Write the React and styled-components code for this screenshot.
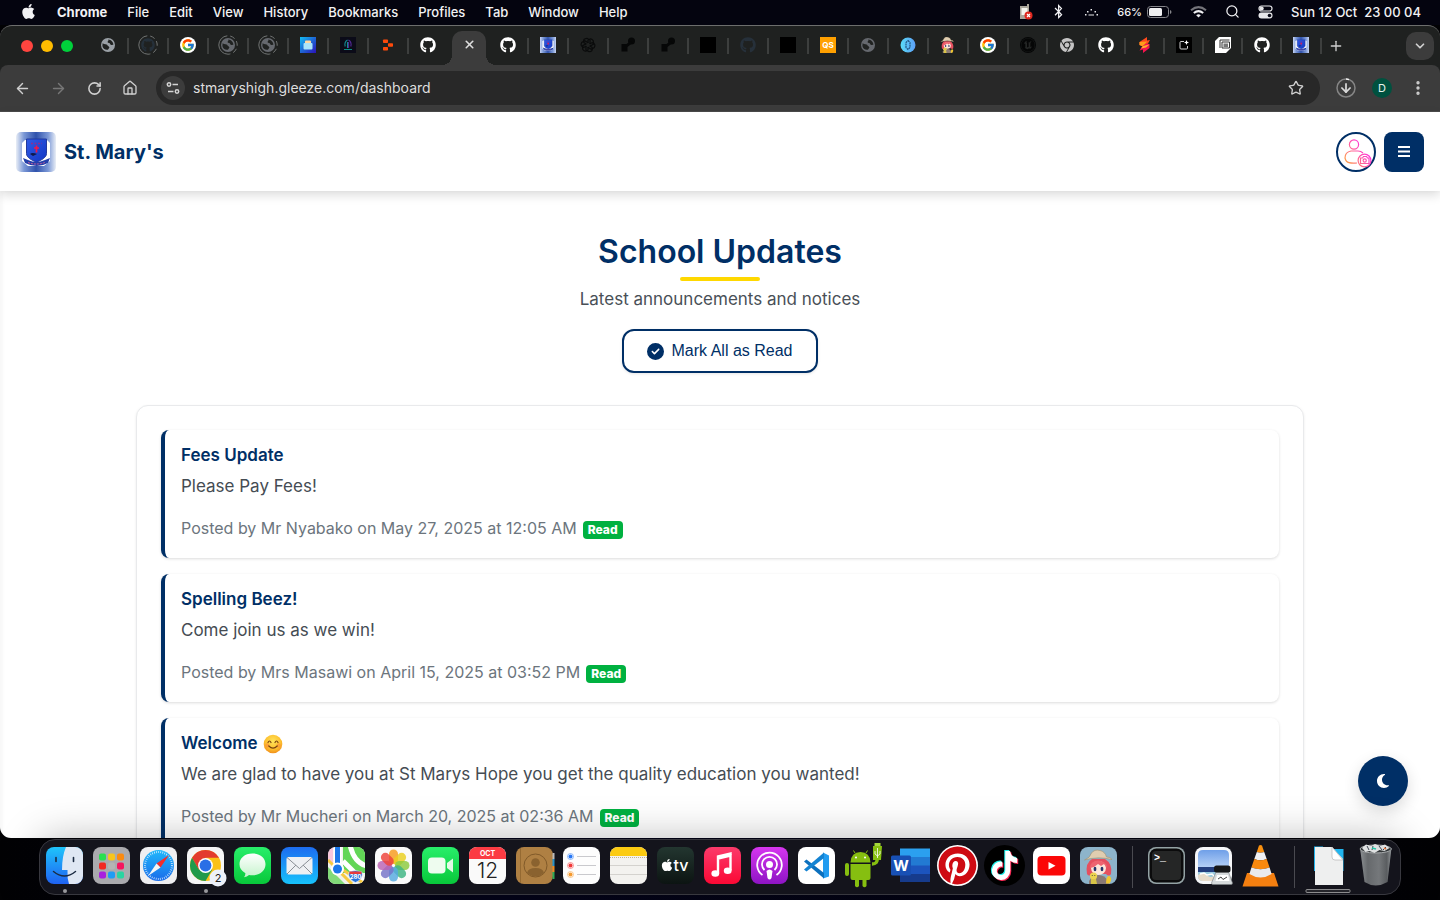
import React from "react";
import styled, { createGlobalStyle, css } from "styled-components";
import {
  FaApple, FaGithub, FaChrome, FaTiktok, FaPinterest, FaBluetoothB, FaMoon, FaCircleCheck,
} from "react-icons/fa6";
import { FcGoogle } from "react-icons/fc";
import { SiUnrealengine } from "react-icons/si";
import {
  ArrowLeft, ArrowRight, RotateCw, House, Star, ArrowDown, EllipsisVertical, X, Plus, ChevronDown, Search,
} from "lucide-react";

const navy = "#002f66";

const GlobalStyle = createGlobalStyle`
  * { box-sizing: border-box; }
  body { margin: 0; background: #020208; font-family: Inter, "Liberation Sans", sans-serif; }
  button, input { font: inherit; }
  h1, h2, h3, p { margin: 0; }
`;

const Desktop = styled.div`
  height: 100vh;
  display: flex;
  flex-direction: column;
  overflow: hidden;
  background: linear-gradient(90deg, #020204, #04041a 35%, #030312 70%, #020204);
`;

/* ---------- macOS menu bar ---------- */

const MenuBar = styled.header`
  flex: none;
  height: 25px;
  padding: 0 19px 2px 20px;
  display: flex;
  align-items: center;
  justify-content: space-between;
  color: #f2f2f4;
  font-size: 13px;
  line-height: 16px;
  background: #04040f;
`;

const MenuList = styled.nav`
  display: flex;
  align-items: center;
  gap: 20px;
  white-space: nowrap;
`;

const MenuItem = styled.button`
  border: 0;
  padding: 0;
  background: none;
  color: inherit;
  font-weight: ${(p) => (p.$strong ? 700 : 500)};
`;

const StatusList = styled.div`
  display: flex;
  align-items: center;
  gap: 18px;
  white-space: pre;
  font-weight: 500;
`;

const BatteryStatus = styled.span`
  display: flex;
  align-items: center;
  gap: 5px;
  font-size: 11px;
`;

/* ---------- Chrome window ---------- */

const Window = styled.section`
  flex: 1;
  min-height: 0;
  display: flex;
  flex-direction: column;
  overflow: hidden;
  border-top: 1px solid #6d6e6d;
  border-radius: 12px 12px 11px 11px;
  background: #1f2120;
`;

const TabStrip = styled.div`
  flex: none;
  height: 39px;
  padding: 0 6px 0 21px;
  display: flex;
  align-items: center;
`;

const TrafficLights = styled.div`
  width: 68px;
  display: flex;
  gap: 8px;
`;

const Light = styled.button`
  width: 12px;
  height: 12px;
  padding: 0;
  border: 0;
  border-radius: 50%;
  background: ${(p) => p.$color};
`;

const TabCell = styled.div`
  flex: none;
  width: ${(p) => (p.$narrow ? 39 : 40)}px;
  height: 100%;
  display: flex;
  align-items: center;
  &::after {
    content: "";
    width: 2px;
    height: 16px;
    background: ${(p) => (p.$plain ? "transparent" : "#3d3f3e")};
  }
`;

const TabButton = styled.button`
  flex: 1;
  height: 32px;
  padding: 0 0 2px;
  border: 0;
  background: none;
  display: flex;
  align-items: center;
  justify-content: center;
  color: ${(p) => p.$color || "#fff"};
  svg { display: block; flex: none; }
`;

const ActiveTab = styled.div`
  position: relative;
  flex: none;
  align-self: flex-end;
  width: 34px;
  height: 34px;
  padding-bottom: 6px;
  margin: 0 3px;
  border-radius: 10px 10px 0 0;
  background: #3c3c3c;
  display: flex;
  align-items: center;
  &::before, &::after {
    content: "";
    position: absolute;
    bottom: 0;
    width: 10px;
    height: 10px;
  }
  &::before { right: 100%; background: radial-gradient(circle at 0 0, transparent 10px, #3c3c3c 10px); }
  &::after { left: 100%; background: radial-gradient(circle at 100% 0, transparent 10px, #3c3c3c 10px); }
`;

const IconButton = styled.button`
  flex: none;
  width: 28px;
  height: 28px;
  padding: 0;
  border: 0;
  border-radius: ${(p) => (p.$filled ? "10px" : "50%")};
  background: ${(p) => (p.$filled ? "#3c3c3c" : "none")};
  color: ${(p) => (p.$dim ? "#777" : "#cfcfcf")};
  display: flex;
  align-items: center;
  justify-content: center;
`;

const Spacer = styled.div`flex: 1;`;

const Toolbar = styled.div`
  flex: none;
  height: 47px;
  padding: 0 8px;
  display: flex;
  align-items: center;
  gap: 8px;
  border-bottom: 1px solid #4b4b4b;
  border-radius: 8px 8px 0 0;
  background: #3c3c3c;
`;

const Omnibox = styled.form`
  flex: 1;
  height: 34px;
  margin: 0 4px;
  padding: 0 10px 0 5px;
  display: flex;
  align-items: center;
  gap: 8px;
  border-radius: 17px;
  background: #282828;
`;

const SiteInfo = styled(IconButton)`
  width: 24px;
  height: 24px;
  background: #3c3c3c;
`;

const Address = styled.input`
  flex: 1;
  min-width: 0;
  padding: 0;
  border: 0;
  outline: 0;
  background: none;
  color: #dedede;
  font-size: 14px;
  line-height: 20px;
`;

const Profile = styled.span`
  width: 20px;
  height: 20px;
  border-radius: 50%;
  background: #00513f;
  color: #e6f4f0;
  font-size: 11px;
  line-height: 20px;
`;

/* ---------- School site ---------- */

const Viewport = styled.div`
  position: relative;
  flex: 1;
  min-height: 0;
  display: flex;
  flex-direction: column;
  background: #fff;
`;

const SiteHeader = styled.header`
  position: relative;
  flex: none;
  padding: 20px 16px 19px;
  display: flex;
  align-items: center;
  justify-content: space-between;
  background: #fff;
  box-shadow: 0 4px 10px rgba(0, 0, 0, 0.14);
`;

const Brand = styled.a`
  display: flex;
  align-items: center;
  gap: 8px;
  color: ${navy};
  font-size: 20px;
  font-weight: 700;
  line-height: 24px;
  text-decoration: none;
`;

const HeaderActions = styled.div`
  display: flex;
  gap: 8px;
`;

const roundBox = css`
  width: 40px;
  height: 40px;
  padding: 0;
  display: flex;
  align-items: center;
  justify-content: center;
`;

const AvatarButton = styled.button`
  ${roundBox}
  border: 2px solid ${navy};
  border-radius: 50%;
  background: #fff;
`;

const MenuButton = styled.button`
  ${roundBox}
  border: 0;
  border-radius: 8px;
  background: ${navy};
  color: #fff;
`;

const Content = styled.main`
  flex: 1;
  min-height: 0;
  overflow: auto;
  scrollbar-width: none;
  padding: 41px 136px;
  box-shadow: inset 3px 0 3px rgba(0, 0, 0, 0.03);
`;

const Intro = styled.div`
  display: flex;
  flex-direction: column;
  align-items: center;
`;

const Title = styled.h1`
  color: ${navy};
  font-size: 32px;
  font-weight: 600;
  line-height: 40px;
  &::after {
    content: "";
    display: block;
    width: 80px;
    height: 4px;
    margin: 5px auto 0;
    border-radius: 2px;
    background: #ffd800;
  }
`;

const Subtitle = styled.p`
  margin-top: 5px;
  color: #495057;
  font-size: 17px;
  line-height: 26px;
`;

const MarkRead = styled.button`
  height: 44px;
  margin-top: 17px;
  padding: 0 24px 0 23px;
  display: flex;
  align-items: center;
  gap: 8px;
  border: 2px solid ${navy};
  border-radius: 12px;
  background: #fff;
  color: ${navy};
  font-family: "Liberation Sans", Arial, sans-serif;
  font-size: 16px;
  box-shadow: 0 1px 3px rgba(0, 0, 0, 0.1);
`;

const NoticeList = styled.section`
  margin-top: 32px;
  padding: 24px;
  display: flex;
  flex-direction: column;
  gap: 16px;
  border: 1px solid #e9eaec;
  border-radius: 12px;
  background: #fff;
  box-shadow: 0 1px 3px rgba(0, 0, 0, 0.08);
`;

const NoticeCard = styled.article`
  padding: 16px;
  border-left: 4px solid ${navy};
  border-radius: 8px;
  background: #fff;
  box-shadow: 0 1px 3px rgba(0, 0, 0, 0.14);
`;

const NoticeTitle = styled.h3`
  display: flex;
  align-items: center;
  gap: 5px;
  height: 19px;
  color: ${navy};
  font-size: 17px;
  font-weight: 600;
  line-height: 19px;
`;

const NoticeBody = styled.p`
  margin-top: 8px;
  color: #454c53;
  font-size: 17px;
  line-height: 26px;
`;

const NoticeMeta = styled.p`
  margin-top: 16px;
  display: flex;
  align-items: center;
  gap: 6px;
  color: #6c757d;
  font-size: 16px;
  line-height: 27px;
`;

const Badge = styled.span`
  padding: 0 5px;
  margin-top: 3px;
  border-radius: 4px;
  background: #00b140;
  color: #fff;
  font-size: 12px;
  font-weight: 800;
  line-height: 18px;
`;

const ThemeToggle = styled.button`
  position: absolute;
  right: 32px;
  bottom: 32px;
  width: 50px;
  height: 50px;
  padding: 0;
  border: 0;
  border-radius: 50%;
  background: ${navy};
  color: #fff;
  display: flex;
  align-items: center;
  justify-content: center;
  box-shadow: 0 6px 16px rgba(0, 0, 0, 0.14);
`;

/* ---------- Dock ---------- */

const DockArea = styled.footer`
  position: relative;
  flex: none;
  height: 62px;
  padding-top: 1px;
  display: flex;
  justify-content: center;
  align-items: flex-start;
`;

const Dock = styled.div`
  height: 56px;
  padding: 0 1px;
  display: flex;
  border: 1px solid #38383f;
  border-radius: 16px;
  background: #14141c;
  box-shadow: 0 0 42px rgba(0, 0, 0, 0.28);
`;

const DockItem = styled.button`
  flex: none;
  width: 47px;
  padding: 7px 0 0;
  border: 0;
  background: none;
  display: flex;
  flex-direction: column;
  align-items: center;
  gap: 5px;
  svg { display: block; overflow: visible; flex: none; }
  &::after {
    content: "";
    width: 4px;
    height: 4px;
    border-radius: 50%;
    background: ${(p) => (p.$running ? "#98989c" : "transparent")};
  }
`;

const DockDivider = styled.div`
  flex: none;
  width: 1px;
  height: 42px;
  margin: 6px 10px;
  background: #4a4a50;
`;

/* ---------- Small drawings ---------- */

const GlobeShape = ({ fill }) => (
  <g>
    <circle cx="8" cy="8" r="7" fill={fill} />
    <path d="M2.6 6.2C5 7.8 7.3 6.6 7.6 8.6c.1 1 1.4.6 1.7 1.6.2 1-1 1.500-1.300 2.500-2.700.6-5.200-1.200-5.600-3.600ZM8.200 2.600c.9 1.400-.9 1.800-.6 2.700.3.900 2.500.3 2.600 1.600.1.900 1.500 1.300 3.200.9-.1-2.500-2.200-4.900-5.200-5.200Z" fill="#202221" />
  </g>
);

const Globe = ({ fill = "#9aa0a6" }) => (
  <svg width="16" height="16" viewBox="0 0 16 16"><GlobeShape fill={fill} /></svg>
);

const Ring = () => (
  <circle cx="10" cy="10" r="9.200" fill="none" stroke="#707372" strokeWidth="1" strokeDasharray="28 3 5 3 5 3 5 3" transform="rotate(90 10 10)" />
);

const LoadingGlobe = () => (
  <svg width="20" height="20" viewBox="0 0 20 20">
    <Ring />
    <g transform="translate(2 2)"><GlobeShape fill="#66696f" /></g>
  </svg>
);

const LoadingGithub = () => (
  <svg width="20" height="20" viewBox="0 0 20 20">
    <Ring />
    <FaGithub x="3" y="3" size={14} color="#25303a" />
  </svg>
);

const GoogleIcon = () => (
  <svg width="16" height="16" viewBox="0 0 16 16">
    <circle cx="8" cy="8" r="8" fill="#fff" />
    <FcGoogle x="1" y="1" size={14} />
  </svg>
);

const MailFavicon = () => (
  <svg width="16" height="16" viewBox="0 0 16 16">
    <defs><linearGradient id="mf" x1="0" y1="0" x2="1" y2="1"><stop stopColor="#12bdf2" /><stop offset="1" stopColor="#2a10b8" /></linearGradient></defs>
    <rect width="16" height="16" fill="url(#mf)" />
    <rect x="5" y="3.500" width="6" height="5" rx="1" fill="#ffd9a0" />
    <rect x="3.500" y="6" width="9" height="6.500" rx="1" fill="#a9e4fb" />
  </svg>
);

const NeonFavicon = () => (
  <svg width="16" height="16" viewBox="0 0 16 16">
    <rect width="16" height="16" fill="#0b0b18" />
    <path d="M7.500 3C5 4.500 4.500 7 5.200 9.500M7.500 5v6" stroke="#138a94" fill="none" strokeWidth="1.100" />
    <path d="M8.500 3c2.500 1.500 3 4 2.300 6.500M8.600 5v6" stroke="#542a98" fill="none" strokeWidth="1.100" />
    <path d="M4 12.500h8" stroke="#0c8d83" strokeWidth="1.200" />
  </svg>
);

const ReplitIcon = () => (
  <svg width="16" height="16" viewBox="0 0 16 16" fill="#ff4a0a">
    <rect x="3" y="2.500" width="5" height="3.600" rx=".8" />
    <rect x="8" y="6.200" width="5" height="3.600" rx=".8" />
    <rect x="3" y="9.900" width="5" height="3.600" rx=".8" />
  </svg>
);

const Crest = ({ size = 16, id = "a", soft }) => (
  <svg width={size} height={size} viewBox="0 0 40 40" role="img" aria-label="School crest">
    <defs>
      <linearGradient id={`cr${id}`}>
        <stop stopColor={soft ? "#e9eef6" : "#c6d3f3"} /><stop offset=".2" stopColor="#7b98d6" /><stop offset=".5" stopColor="#2f52ac" />
        <stop offset=".8" stopColor="#7b98d6" /><stop offset="1" stopColor={soft ? "#e9eef6" : "#c6d3f3"} />
      </linearGradient>
      <linearGradient id={`cs${id}`} x1="0" y1="0" x2="1" y2="1"><stop stopColor="#2f5be6" /><stop offset="1" stopColor="#1236c4" /></linearGradient>
    </defs>
    <rect width="40" height="40" rx={soft ? 5 : 0} fill={`url(#cr${id})`} />
    <path d="M9 8h22l3 3v18l-6 5H12l-6-5V11Z" fill="#fff" />
    <path d="M10.500 7h20v14.500c0 4-5 6.500-10 8.800-5-2.300-10-4.800-10-8.800Z" fill={`url(#cs${id})`} stroke="#233a9c" />
    <path d="M15 11.500h11" stroke="#8a2d94" strokeWidth="1.300" strokeDasharray="2 1.500" />
    <path d="M20.500 13.500v7M18 16h5" stroke="#f01848" strokeWidth="1.700" />
    <path d="M14 22q2-2 7 0l-4 2Z" fill="#101848" />
    <path d="M7 26l5 2q8 4 17 0l5-2-2 5q-11 6-23 0Z" fill="#2440aa" />
    <path d="M12 30.500q8 3 17 0" stroke="#c75b9a" fill="none" strokeDasharray="2 1" />
  </svg>
);

const KnotIcon = () => (
  <svg width="16" height="16" viewBox="0 0 16 16" fill="none" stroke="#0a0b0b" strokeWidth="1.200">
    {[0, 60, 120, 180, 240, 300].map((a) => (
      <path key={a} d="M8 6V3.200q3-3 5.300.6v3.500L9.800 9.300" transform={`rotate(${a} 8 8)`} />
    ))}
  </svg>
);

const NodeIcon = () => (
  <svg width="16" height="16" viewBox="0 0 16 16" fill="#060707">
    <circle cx="11.500" cy="4" r="3.500" />
    <path d="M1.500 7h5l4-3 2 2-5 4v4.500h-6Z" />
  </svg>
);

const BlackSquare = () => <svg width="16" height="16"><rect width="16" height="16" fill="#000" /></svg>;

const QsIcon = () => (
  <svg width="16" height="16" viewBox="0 0 16 16">
    <rect width="16" height="16" fill="#ffa000" />
    <text x="8" y="11" textAnchor="middle" fontFamily="Inter, sans-serif" fontSize="8" fontWeight="700" fill="#fff">QS</text>
  </svg>
);

const CyanIcon = () => (
  <svg width="16" height="16" viewBox="0 0 16 16">
    <defs><linearGradient id="cy"><stop stopColor="#5adcf7" /><stop offset="1" stopColor="#5c9df5" /></linearGradient></defs>
    <circle cx="8" cy="8" r="7.500" fill="url(#cy)" />
    <path d="M8 3.500 10 5.500v5l-2 2-2-2v-5Z" stroke="#1c4a74" fill="none" strokeWidth="1.100" strokeDasharray="2 .6" />
  </svg>
);

const AnimeFace = () => (
  <g>
    <path d="M9 34Q12 28 18.500 28T28 34L29 37H9Z" fill="#8b7a74" />
    <path d="M7 27Q5 16 12 12h13q8 5 6 15-2 3-5 0H12q-3 3-5 0Z" fill="#e5505f" />
    <ellipse cx="18.500" cy="21" rx="7.500" ry="7" fill="#fde6da" />
    <path d="M10 21q0-7 8-7.500Q27 14 27 21l-3-4-3 2-3-2-4 3Z" fill="#ee6470" />
    <ellipse cx="15" cy="22" rx="1.400" ry="2.200" fill="#24356b" />
    <ellipse cx="22" cy="22" rx="1.400" ry="2.200" fill="#24356b" />
    <path d="M4.500 13Q10 11 11.500 6q3-4 8.500-2.500 5 1 6.500 6.500 4 0 5.500 2.500Q18 9 4.500 13Z" fill="#e0cdb0" stroke="#a3906f" strokeWidth=".6" />
    <circle cx="13.500" cy="29" r="3.600" fill="#ecd34f" />
    <circle cx="12.300" cy="28.500" r=".6" fill="#553" /><circle cx="14.800" cy="28.500" r=".6" fill="#553" />
    <path d="M26 36.500q0-8.500 3.500-7.500 3.500 3 0 7.500Z" fill="#f1c730" />
    <path d="M11 32h5l1 5h-6Z" fill="#d9c548" />
  </g>
);

const AnimeFavicon = () => (
  <svg width="16" height="16" viewBox="3 3 34 34"><AnimeFace /></svg>
);

const UnrealFavicon = () => (
  <svg width="16" height="16" viewBox="0 0 16 16">
    <circle cx="8" cy="8" r="8" fill="#050606" />
    <SiUnrealengine x="1" y="1" size={14} color="#242625" />
  </svg>
);

const FlashIcon = () => (
  <svg width="16" height="16" viewBox="0 0 16 16">
    <path d="M10 0v3.500l3-.5-2 3.500L6 9.500 2.500 8V5Z" fill="#ff4a1c" />
    <path d="M2.500 5 10 4.500l-4 5L2.500 8Z" fill="#ff9c1a" />
    <path d="M6 16v-3.500l-3.500 1 2.500-4 4-3L12.500 7v4Z" fill="#f5134e" />
    <path d="M12.500 7.500 6 9l-2 2.500 5-1Z" fill="#ffb02a" />
  </svg>
);

const SparkIcon = () => (
  <svg width="16" height="16" viewBox="0 0 16 16">
    <rect width="16" height="16" fill="#000" />
    <path d="M8 4.500H5q-1 0-1 1V11q0 1 1 1h5.500q1 0 1-1V9" fill="none" stroke="#d0d0d0" strokeWidth="1" />
    <path d="M10.500 3 11.200 4.800 13 5.500 11.200 6.200 10.500 8 9.800 6.200 8 5.500 9.800 4.800Z" fill="#fff" />
  </svg>
);

const StackIcon = () => (
  <svg width="16" height="16" viewBox="0 0 16 16">
    <path d="M4 0h12v11l-5 5H0V4Z" fill="#fff" />
    <path d="M5 11V3h9.500M7 11V5h7.500v6Z" fill="none" stroke="#303030" strokeWidth="1" /><rect x="8.500" y="6.500" width="4.500" height="3.500" fill="#777" />
  </svg>
);

const TuneIcon = () => (
  <svg width="16" height="16" viewBox="0 0 16 16" fill="none" stroke="#d4d4d4" strokeWidth="1.500">
    <circle cx="4" cy="4.500" r="1.700" /><path d="M7.500 4.500H13M3 11.500h5.500" /><circle cx="12" cy="11.500" r="1.700" />
  </svg>
);

const DownloadIcon = () => (
  <svg width="20" height="20" viewBox="0 0 20 20">
    <circle cx="10" cy="10" r="9" fill="none" stroke="#858585" strokeWidth="1.500" />
    <path d="M10 1a9 9 0 0 1 3 .6" fill="none" stroke="#eee" strokeWidth="1.500" />
    <ArrowDown x="3" y="3" size={14} strokeWidth={3} color="#d8d8d8" />
  </svg>
);

const PhoneStatus = () => (
  <svg width="14" height="16" viewBox="0 0 14 16">
    <path d="M1 2h7V0h2v15H1Z" fill="#aaa69c" /><rect x="2.500" y="4" width="6" height="7" fill="#f4f4ee" />
    <circle cx="9.500" cy="11.500" r="4" fill="#e0281f" /><path d="m8 10 3 3m0-3-3 3" stroke="#fff" strokeWidth="1.200" />
  </svg>
);

const DotsStatus = () => (
  <svg width="15" height="10" viewBox="0 0 15 10" fill="#e8e8ea">
    <rect x="1" y="7" width="1.500" height="1.500" /><rect x="3" y="4" width="1.500" height="1.500" /><rect x="4.500" y="7.500" width="5.500" height="1" />
    <rect x="6.500" y="2" width="1.500" height="1.500" /><rect x="10.500" y="4" width="1.500" height="1.500" /><rect x="12.500" y="7" width="1.500" height="1.500" />
  </svg>
);

const Battery = () => (
  <svg width="25" height="12" viewBox="0 0 25 12">
    <rect x=".5" y=".5" width="21" height="11" rx="3" fill="none" stroke="#85858a" />
    <rect x="2" y="2" width="13" height="8" rx="1.500" fill="#f0f0f2" /><path d="M23 4v4q1.500-.5 1.500-2T23 4Z" fill="#85858a" />
  </svg>
);

const WifiStatus = () => (
  <svg width="17" height="12" viewBox="0 0 17 12" fill="none" strokeWidth="2">
    <path d="M1 4.200Q8.500-2 16 4.200" stroke="#74747a" /><path d="M3.800 7Q8.500 3.200 13.200 7" stroke="#f0f0f2" />
    <path d="M6.200 9.200Q8.500 7.400 10.800 9.200L8.500 11.500Z" fill="#f0f0f2" />
  </svg>
);

const ControlCenter = () => (
  <svg width="15" height="14" viewBox="0 0 15 14">
    <rect x="1" y="1" width="13" height="5" rx="2.500" fill="none" stroke="#e8e8ea" strokeWidth="1.200" /><circle cx="3.700" cy="3.500" r="2" fill="#e8e8ea" />
    <rect x=".5" y="7.500" width="14" height="6" rx="3" fill="#e8e8ea" /><circle cx="11.500" cy="10.500" r="1.800" fill="#080814" />
  </svg>
);

const Smile = () => (
  <svg width="20" height="20" viewBox="0 0 20 20" role="img" aria-label="😊">
    <defs><radialGradient id="sm" cx=".5" cy=".35" r=".7"><stop stopColor="#ffe45a" /><stop offset=".6" stopColor="#fdc02f" /><stop offset="1" stopColor="#ee8516" /></radialGradient></defs>
    <circle cx="10" cy="10" r="9.300" fill="url(#sm)" />
    <circle cx="4.300" cy="11.500" r="2.200" fill="#fb8d3a" opacity=".6" /><circle cx="15.700" cy="11.500" r="2.200" fill="#fb8d3a" opacity=".6" />
    <path d="M5 8.500q1.500-3 3 0M12 8.500q1.500-3 3 0M5.800 12q4.200 4.300 8.400 0" fill="none" stroke="#7a4210" strokeWidth="1.200" strokeLinecap="round" />
  </svg>
);

const AvatarDrawing = () => (
  <svg width="36" height="36" viewBox="0 0 36 36" fill="none" stroke="url(#av)" strokeWidth="1.200">
    <defs><linearGradient id="av" gradientUnits="userSpaceOnUse" x1="7" y1="26" x2="26" y2="12"><stop stopColor="#ff9b4a" /><stop offset="1" stopColor="#ff2fe0" /></linearGradient></defs>
    <circle cx="16" cy="10.500" r="4.600" />
    <path d="M25 19q-2-2-5-2h-7q-6 1-6 7 1 4 4 4.700 3 .8 8 .3" />
    <circle cx="26.500" cy="26.500" r="6.400" fill="#fff" />
    <path d="M22.500 24h2l1-1.500h3l1 1.500H31v5.500h-8.500Z" /><circle cx="26.700" cy="26.500" r="1.600" />
  </svg>
);

const BarsIcon = () => (
  <svg width="12" height="14" viewBox="0 0 12 14" stroke="#fff" strokeWidth="1.800"><path d="M0 2h12M0 6.500h12M0 11h12" /></svg>
);

/* ---------- Dock icons ---------- */

const Tile = ({ fill, children }) => (
  <svg width="37" height="37" viewBox="0 0 37 37">
    <rect width="37" height="37" rx="8" fill={fill} />
    {children}
  </svg>
);

const Fade = ({ id, from, to }) => (
  <defs><linearGradient id={id} x1="0" y1="0" x2="0" y2="1"><stop stopColor={from} /><stop offset="1" stopColor={to} /></linearGradient></defs>
);

const Finder = () => (
  <Tile fill="url(#fi)">
    <Fade id="fi" from="#1fc4fb" to="#1f62f2" />
    <path d="M20 0h9a8 8 0 0 1 8 8v21a8 8 0 0 1-8 8h-6q-2-6-1.500-14H16Q16 9 20 0Z" fill="#dfe7f3" />
    <path d="M10 10.500v4M27.500 10.500v4" stroke="#1b2b42" strokeWidth="1.600" strokeLinecap="round" />
    <path d="M7.500 24.500q11 9 22 0" fill="none" stroke="#1b2b42" strokeWidth="1.500" strokeLinecap="round" />
  </Tile>
);

const launchColors = ["#29e04f", "#f8c51d", "#fb8a10", "#f22822", "#b4b4b4", "#f5145f", "#a820df", "#1e9cf4", "#2ad5a1"];
const Launchpad = () => (
  <Tile fill="#aaaaae">
    {launchColors.map((c, i) => (
      <rect key={c} x={6 + (i % 3) * 9} y={6.500 + Math.floor(i / 3) * 9} width="7" height="7" rx="2" fill={c} />
    ))}
  </Tile>
);

const Safari = () => (
  <Tile fill="#efeff1">
    <Fade id="sf" from="#20b8fb" to="#1a6bea" />
    <circle cx="18.500" cy="18.500" r="15.500" fill="url(#sf)" />
    <circle cx="18.500" cy="18.500" r="13.500" fill="none" stroke="#dff0ff" strokeWidth="2" strokeDasharray=".7 1.400" />
    <path d="M29 8 20.500 20.500 16.500 16.500Z" fill="#f22d2d" /><path d="M8 29 16.500 16.500 20.500 20.500Z" fill="#f5f5f5" />
  </Tile>
);

const ChromeDock = () => (
  <Tile fill="#f5f5f6">
    <circle cx="18.500" cy="18.500" r="15.500" fill="#fbc116" />
    <path d="M5 10.800A15.500 15.500 0 0 1 32 10.800H18.500l-7 11.500Z" fill="#e33b2e" />
    <path d="M5 10.800a15.500 15.500 0 0 0 13.500 23.200l6.800-11.500-13.500 0Z" fill="#219a4b" />
    <circle cx="18.500" cy="18.500" r="7.400" fill="#fff" /><circle cx="18.500" cy="18.500" r="5.900" fill="#2a6fe6" />
    <circle cx="31" cy="31" r="8.500" fill="#edf1fa" />
    <text x="31" y="35" textAnchor="middle" fontSize="11" fontFamily="Inter, sans-serif" fill="#222">2</text>
  </Tile>
);

const Messages = () => (
  <Tile fill="url(#ms)">
    <Fade id="ms" from="#28ee6a" to="#08c83a" /><Fade id="mb" from="#fff" to="#c5f3cc" />
    <path d="M18.500 6.500c8 0 13 4.800 13 10.800s-5 11-13 11q-2 0-3.500-.4-2 2-5 2.300 1.500-2 1.400-4Q5.500 23 5.500 17.300c0-6 5-10.800 13-10.800Z" fill="url(#mb)" />
  </Tile>
);

const Mail = () => (
  <Tile fill="url(#ml)">
    <Fade id="ml" from="#1d6cf0" to="#17c2fc" />
    <rect x="5.500" y="10" width="26" height="17.500" rx="2" fill="#eef0f3" />
    <path d="m6 10.500 12.500 11 12.500-11M6 27l9-9M31 27l-9-9" fill="none" stroke="#8b9096" />
  </Tile>
);

const Maps = () => (
  <Tile fill="#f0f2ec">
    <defs><clipPath id="mc"><rect width="37" height="37" rx="8" /></clipPath></defs>
    <g clipPath="url(#mc)">
      <path d="M0 0h5v16H0Z" fill="#f7c6dc" /><path d="M15 0h22v26H15Z" fill="#62d656" />
      <path d="M22-2q4 18 17 21M15 14l24 24" fill="none" stroke="#fff" strokeWidth="5" />
      <path d="M0 13l24 24M15 23 37 37" stroke="#f6c940" strokeWidth="3" /><path d="M0 20v17h17Z" fill="#82da78" />
      <path d="M9.500 0v20" stroke="#fff" strokeWidth="8" /><path d="M9.500 0v20" stroke="#1b78ea" strokeWidth="5" />
      <circle cx="9.500" cy="22" r="6.500" fill="#fff" /><circle cx="9.500" cy="22" r="4.500" fill="#1b78ea" />
      <path d="M21 25q6-3 13 0 2 7-6.500 10.500Q19 32 21 25Z" fill="#2572dd" stroke="#fff" strokeWidth=".6" /><path d="M21.500 24.500h12v2.500h-12Z" fill="#e83b3b" />
      <text x="27.500" y="32" textAnchor="middle" fontSize="6" fontWeight="700" fontFamily="Inter, sans-serif" fill="#fff">280</text>
    </g>
  </Tile>
);

const petals = ["#f89b1c", "#ead01e", "#8cca3d", "#3db583", "#55a9e0", "#7473c8", "#bb63b4", "#ee4138"];
const Photos = () => (
  <Tile fill="#fafafa">
    {petals.map((c, i) => (
      <rect key={c} x="14" y="2.500" width="9" height="14.500" rx="4.500" fill={c} opacity=".82" transform={`rotate(${i * 45} 18.500 18.500)`} />
    ))}
  </Tile>
);

const FaceTime = () => (
  <Tile fill="url(#ms)">
    <rect x="6" y="10.500" width="17.500" height="16" rx="4" fill="#eefcef" /><path d="m25 16 6-4.500v14L25 21Z" fill="#e3fae6" />
  </Tile>
);

const Calendar = () => (
  <Tile fill="#fafafa">
    <path d="M0 12V8a8 8 0 0 1 8-8h21a8 8 0 0 1 8 8v4Z" fill="#fb3b43" />
    <text x="18.500" y="9" textAnchor="middle" fontSize="7" fontWeight="700" fontFamily="Inter, sans-serif" fill="#fff">OCT</text>
    <text x="18.500" y="31" textAnchor="middle" fontSize="21" fontWeight="300" fontFamily="Inter, sans-serif" fill="#222">12</text>
  </Tile>
);

const Contacts = () => (
  <Tile fill="#af8043">
    <path d="M36.500 6h2v6h-2Z" fill="#bbb" /><path d="M36.500 12h2v7h-2Z" fill="#2993c8" /><path d="M36.500 19h2v6h-2Z" fill="#ef8c23" /><path d="M36.500 25h2v7h-2Z" fill="#30ad55" />
    <path d="M4.500 1v35" stroke="#8e652f" strokeWidth=".8" />
    <circle cx="19.500" cy="18.500" r="11.500" fill="none" stroke="#815a29" />
    <circle cx="19.500" cy="15.500" r="4.300" fill="#8a622f" /><path d="M11 26q1-5 8.500-5t8.500 5q-8 7-17 0Z" fill="#8a622f" />
  </Tile>
);

const Reminders = () => (
  <Tile fill="#fdfdfd">
    {["#2777f5", "#f13737", "#f59a2f"].map((c, i) => (
      <g key={c}><circle cx="7.500" cy={9.500 + i * 9} r="3" fill="#fff" stroke={c} strokeOpacity=".5" /><circle cx="7.500" cy={9.500 + i * 9} r="2" fill={c} /><path d={`M14 ${9.500 + i * 9}h19`} stroke="#c9c9cd" /></g>
    ))}
  </Tile>
);

const Notes = () => (
  <Tile fill="#f3f2ef">
    <path d="M0 9V8a8 8 0 0 1 8-8h21a8 8 0 0 1 8 8v1Z" fill="#fccb11" />
    <path d="M0 10.500h37" stroke="#c3b38a" strokeDasharray="1 1" /><path d="M0 18.500h37M0 27.500h37" stroke="#d4d2ce" />
  </Tile>
);

const AppleTv = () => (
  <Tile fill="url(#tv)">
    <Fade id="tv" from="#233630" to="#0c1412" />
    <FaApple x="3" y="11" size={14} color="#fff" />
    <text x="24" y="24" textAnchor="middle" fontSize="16" fontWeight="500" fontFamily="Inter, sans-serif" fill="#fff">tv</text>
  </Tile>
);

const Music = () => (
  <Tile fill="url(#mu)">
    <Fade id="mu" from="#fb3a6b" to="#fb0934" />
    <path d="M14 11.500 26.500 8.500V23.500M14 26.500V9.500L26.500 6.500V11" fill="none" stroke="#fff" strokeWidth="2.400" />
    <ellipse cx="11.300" cy="26.500" rx="3.900" ry="3.200" fill="#fff" /><ellipse cx="23.700" cy="23.800" rx="3.900" ry="3.200" fill="#fff" />
  </Tile>
);

const Podcasts = () => (
  <Tile fill="url(#po)">
    <Fade id="po" from="#d636ef" to="#8e14c4" />
    <g fill="none" stroke="#fff" strokeWidth="1.800"><path d="M11.500 28a12.300 12.300 0 1 1 14 0" /><path d="M13.500 23a7.500 7.500 0 1 1 10 0" /></g>
    <circle cx="18.500" cy="17.500" r="3.500" fill="#fff" /><path d="M15.500 24q3-3 6 0l-1 7q-2 3-4 0Z" fill="#fff" />
  </Tile>
);

const VsCode = () => (
  <Tile fill="#fff">
    <path d="M25 5.500 31 8.500v21L25 31.500Z" fill="#229cf0" />
    <path d="M6 14.500 8.500 12.500 26 26v5.500L6 14.500Z" fill="#0c70bd" /><path d="M6 22.500 8.500 24.500 26 11V5.500L6 22.500Z" fill="#1483d2" />
  </Tile>
);

const Android = () => (
  <svg width="37" height="37" viewBox="0 0 37 37" fill="#86bf10">
    <path d="M5.500 15.500Q6 5 15.500 5t10 10.500Z" /><path d="M10 6 8.500 3.500M21 6l1.500-2.500" stroke="#86bf10" />
    <circle cx="11" cy="10.500" r="1" fill="#fff" /><circle cx="20" cy="10.500" r="1" fill="#fff" />
    <path d="M5.500 17h20v14q0 2-2 2h-2v6q-2 2.500-4 0v-6h-3.500v6q-2 2.500-4 0v-6H7.500q-2 0-2-2Z" />
    <rect x="0" y="16" width="4" height="13" rx="2" />
    <path d="M27 17q6 0 5-6" fill="none" stroke="#86bf10" strokeWidth="3.500" />
    <path d="M28-1h9l-1 14h-8Z" /><path d="M29.500-4h6v3h-6Z" fill="#a5d83a" />
    <path d="M32.500 1v10M30 4v3l2.500 2L35 7V4" fill="none" stroke="#fff" strokeWidth=".8" />
  </svg>
);

const Word = () => (
  <svg width="38" height="37" viewBox="0 0 38 37">
    <path d="M8 1.500h30v8.500H8Z" fill="#2ba0ef" /><path d="M8 10h30v9H8Z" fill="#227ad3" /><path d="M8 18.500h30V27H8Z" fill="#1c54bd" /><path d="M8 27h30v8H8Z" fill="#163b8c" />
    <rect x="-1" y="8.500" width="20" height="20" rx="1.500" fill="#1850b4" />
    <text x="9" y="24" textAnchor="middle" fontSize="15" fontWeight="700" fontFamily="Inter, sans-serif" fill="#fff">W</text>
  </svg>
);

const Pinterest = () => (
  <svg width="37" height="37" viewBox="0 0 37 37"><circle cx="18.500" cy="18.500" r="20.500" fill="#fff" /><FaPinterest x="-1" y="-1" size={39} color="#ce0b13" /></svg>
);

const Tiktok = () => (
  <svg width="37" height="37" viewBox="0 0 37 37">
    <circle cx="18.500" cy="18.500" r="20.500" fill="#000" />
    <FaTiktok x="3" y="3" size={29} color="#21eee8" /><FaTiktok x="5" y="5" size={29} color="#fb2854" /><FaTiktok x="4" y="4" size={29} color="#fff" />
  </svg>
);

const Youtube = () => (
  <Tile fill="#fff"><rect x="4.500" y="9" width="28" height="19.500" rx="4" fill="#fb0707" /><path d="m15.500 15 7 3.700-7 3.800Z" fill="#fff" /></Tile>
);

const AnimeDock = () => <Tile fill="#8db4cb"><AnimeFace /></Tile>;

const Terminal = () => (
  <Tile fill="#94a3a5">
    <rect x="1.500" y="1.500" width="34" height="34" rx="7" fill="#0b0b0c" /><rect x="4" y="4" width="29" height="29" rx="4" fill="#252626" />
    <text x="6" y="14" fontSize="10" fontWeight="700" fontFamily="Liberation Mono, monospace" fill="#fff">&gt;_</text>
  </Tile>
);

const Preview = () => (
  <Tile fill="#f6f7f9">
    <Fade id="sky" from="#6f9fe8" to="#b4d0f7" />
    <path d="M3 20V8q0-5 5-5h21q5 0 5 5v12Z" fill="url(#sky)" /><path d="M3 20h31v5H3Z" fill="#243f7f" />
    <path d="M3 25h31v4q0 5-5 5H8q-5 0-5-5Z" fill="#9ccbe0" /><path d="M3 28q6-4 9 0t9 0v6H8q-5 0-5-5Z" fill="#e8dccb" /><path d="m5 27 4-1 3 2 5-1 3 3" fill="none" stroke="#fff" strokeWidth="1.500" />
    <path d="m21 25-4.500 11q0 1.500 1.500 1.500h18q1.500 0 1.500-1.500L33.500 25Z" fill="#d5d9db" stroke="#777c80" strokeWidth=".6" />
    <path d="m22 28-1.500 6h14L33 28Z" fill="#fff" /><path d="m23 32 3-2 2 2.500 4-2.500" stroke="#444" fill="none" />
    <rect x="19" y="18.500" width="16.500" height="7" rx="2.500" fill="#161719" />
  </Tile>
);

const Vlc = () => (
  <svg width="37" height="37" viewBox="0 0 37 37">
    <path d="M5 26h27l4.500 13.500H.5Z" fill="#f47f10" />
    <path d="M17-1.500q1.500-1 3 0L22.200 5q-3.700 1.500-7.400 0Z" fill="#fa900f" />
    <path d="M14.800 5q3.700 1.500 7.400 0l2.500 7q-6.200 2.500-12.400 0Z" fill="#f1f1f2" />
    <path d="M12.300 12q6.200 2.500 12.400 0l2.900 8.500q-9.100 3.500-18.200 0Z" fill="#f9890d" />
    <path d="M9.400 20.500q9.100 3.500 18.200 0l2 6.500q-11.100 7-22.200 0Z" fill="#eaeaec" />
  </svg>
);

const Documents = () => (
  <svg width="37" height="37" viewBox="0 0 37 37">
    <path d="M4-.5h9V24H4ZM22 2h11.500v22H22Z" fill="#21b4ed" />
    <path d="M5 0h17l11 12v26H5Z" fill="#eeefef" /><path d="m22 0 11 13h-8q-3 0-3-3Z" fill="#fff" stroke="#b5b5b5" strokeWidth=".7" />
    <rect x="-4" y="42.500" width="44" height="3" rx="1" fill="#25252b" stroke="#aaa" strokeWidth=".8" />
  </svg>
);

const Trash = () => (
  <svg width="37" height="37" viewBox="0 0 37 37">
    <defs><linearGradient id="tr"><stop stopColor="#8c9093" /><stop offset=".25" stopColor="#66696c" /><stop offset=".6" stopColor="#75787b" /><stop offset=".85" stopColor="#5a5d60" /><stop offset="1" stopColor="#94989b" /></linearGradient></defs>
    <path d="m3 1 4.500 34q11 7 23 0L34.500 1Z" fill="url(#tr)" />
    <ellipse cx="18.700" cy="2" rx="15.700" ry="4" fill="#34383a" stroke="#a7aaac" />
    <path d="m5 1 4-3.500 5 1.500 4-2 5 2 5-1.500 4.500 3.500-5 3-5-1-5 3-5-2-4 1Z" fill="#dfe1e2" />
    <path d="m10-1 2 4m4-4-1 4m7-4 3 4m4-3-3 3" stroke="#3d4450" /><path d="m15 1 4 1" stroke="#24c7a8" strokeWidth="1.500" /><path d="m27 1 2 1" stroke="#e07038" strokeWidth="1.500" />
  </svg>
);

/* ---------- Page ---------- */

const gh = { icon: <FaGithub size={16} />, label: "GitHub" };
const tabsBefore = [
  { icon: <Globe />, label: "Web page" }, { icon: <LoadingGithub />, label: "GitHub, loading" }, { icon: <GoogleIcon />, label: "Google" },
  { icon: <LoadingGlobe />, label: "Web page, loading" }, { icon: <LoadingGlobe />, label: "Web page, loading" },
  { icon: <MailFavicon />, label: "Mail" }, { icon: <NeonFavicon />, label: "App" }, { icon: <ReplitIcon />, label: "Replit" }, { ...gh, plain: true },
];
const tabsAfter = [
  gh, { icon: <Crest id="b" />, label: "St. Mary's" }, { icon: <KnotIcon />, label: "Chat" }, { icon: <NodeIcon />, label: "App" }, { icon: <NodeIcon />, label: "App" },
  { icon: <BlackSquare />, label: "App" }, { ...gh, color: "#26303a" }, { icon: <BlackSquare />, label: "App" }, { icon: <QsIcon />, label: "QS" },
  { icon: <Globe fill="#65686e" />, label: "Web page" }, { icon: <CyanIcon />, label: "App" }, { icon: <AnimeFavicon />, label: "App" },
  { icon: <GoogleIcon />, label: "Google" }, { icon: <UnrealFavicon />, label: "Unreal Engine", narrow: true },
  { icon: <FaChrome size={14} />, label: "Chrome", color: "#c4c4c4", narrow: true }, { ...gh, narrow: true }, { icon: <FlashIcon />, label: "App", narrow: true },
  { icon: <SparkIcon />, label: "App", narrow: true }, { icon: <StackIcon />, label: "App", narrow: true }, { ...gh, narrow: true },
  { icon: <Crest id="c" />, label: "St. Mary's" },
];

const Tabs = ({ items }) => items.map((t, i) => (
  <TabCell key={i} $narrow={t.narrow} $plain={t.plain}>
    <TabButton aria-label={t.label} $color={t.color}>{t.icon}</TabButton>
  </TabCell>
));

const menus = ["File", "Edit", "View", "History", "Bookmarks", "Profiles", "Tab", "Window", "Help"];

const notices = [
  { title: "Fees Update", body: "Please Pay Fees!", meta: "Posted by Mr Nyabako on May 27, 2025 at 12:05 AM" },
  { title: "Spelling Beez!", body: "Come join us as we win!", meta: "Posted by Mrs Masawi on April 15, 2025 at 03:52 PM" },
  { title: "Welcome", smile: true, body: "We are glad to have you at St Marys Hope you get the quality education you wanted!", meta: "Posted by Mr Mucheri on March 20, 2025 at 02:36 AM" },
];

const dockGroups = [
  [["Finder", Finder, true], ["Launchpad", Launchpad], ["Safari", Safari], ["Chrome", ChromeDock, true], ["Messages", Messages], ["Mail", Mail], ["Maps", Maps],
    ["Photos", Photos], ["FaceTime", FaceTime], ["Calendar", Calendar], ["Contacts", Contacts], ["Reminders", Reminders], ["Notes", Notes], ["TV", AppleTv],
    ["Music", Music], ["Podcasts", Podcasts], ["VS Code", VsCode], ["Android File Transfer", Android], ["Word", Word], ["Pinterest", Pinterest],
    ["TikTok", Tiktok], ["YouTube", Youtube], ["Anime", AnimeDock]],
  [["Terminal", Terminal], ["Preview", Preview], ["VLC", Vlc]],
  [["Documents", Documents], ["Trash", Trash]],
];

export default function App() {
  return (
    <Desktop>
      <GlobalStyle />
      <MenuBar>
        <MenuList aria-label="Menu bar">
          <FaApple size={17} />
          <MenuItem $strong>Chrome</MenuItem>
          {menus.map((m) => <MenuItem key={m}>{m}</MenuItem>)}
        </MenuList>
        <StatusList>
          <PhoneStatus />
          <FaBluetoothB size={15} />
          <DotsStatus />
          <BatteryStatus>66%<Battery /></BatteryStatus>
          <WifiStatus />
          <Search size={15} />
          <ControlCenter />
          <span>Sun 12 Oct  23 00 04</span>
        </StatusList>
      </MenuBar>

      <Window>
        <TabStrip>
          <TrafficLights>
            <Light $color="#ff453f" aria-label="Close window" />
            <Light $color="#ffbc00" aria-label="Minimise window" />
            <Light $color="#00d03b" aria-label="Zoom window" />
          </TrafficLights>
          <Tabs items={tabsBefore} />
          <ActiveTab>
            <TabButton aria-label="Close tab" $color="#dedede"><X size={13} strokeWidth={3} /></TabButton>
          </ActiveTab>
          <Tabs items={tabsAfter} />
          <IconButton aria-label="New tab"><Plus size={16} /></IconButton>
          <Spacer />
          <IconButton $filled aria-label="Search tabs"><ChevronDown size={14} strokeWidth={3} /></IconButton>
        </TabStrip>
        <Toolbar>
          <IconButton aria-label="Back"><ArrowLeft size={17} /></IconButton>
          <IconButton $dim aria-label="Forward"><ArrowRight size={17} /></IconButton>
          <IconButton aria-label="Reload"><RotateCw size={15} strokeWidth={2.500} /></IconButton>
          <IconButton aria-label="Home"><House size={16} /></IconButton>
          <Omnibox onSubmit={(e) => e.preventDefault()}>
            <SiteInfo type="button" aria-label="Site information"><TuneIcon /></SiteInfo>
            <Address aria-label="Address" defaultValue="stmaryshigh.gleeze.com/dashboard" />
            <IconButton type="button" aria-label="Bookmark"><Star size={16} /></IconButton>
          </Omnibox>
          <IconButton aria-label="Downloads"><DownloadIcon /></IconButton>
          <IconButton aria-label="Profile"><Profile>D</Profile></IconButton>
          <IconButton aria-label="More"><EllipsisVertical size={18} strokeWidth={2.500} /></IconButton>
        </Toolbar>

        <Viewport>
          <SiteHeader>
            <Brand href="#home"><Crest size={40} id="h" soft />St. Mary's</Brand>
            <HeaderActions>
              <AvatarButton aria-label="Account"><AvatarDrawing /></AvatarButton>
              <MenuButton aria-label="Menu"><BarsIcon /></MenuButton>
            </HeaderActions>
          </SiteHeader>
          <Content>
            <Intro>
              <Title>School Updates</Title>
              <Subtitle>Latest announcements and notices</Subtitle>
              <MarkRead><FaCircleCheck size={17} />Mark All as Read</MarkRead>
            </Intro>
            <NoticeList>
              {notices.map((n) => (
                <NoticeCard key={n.title}>
                  <NoticeTitle>{n.title}{n.smile && <Smile />}</NoticeTitle>
                  <NoticeBody>{n.body}</NoticeBody>
                  <NoticeMeta>{n.meta}<Badge>Read</Badge></NoticeMeta>
                </NoticeCard>
              ))}
            </NoticeList>
          </Content>
          <ThemeToggle aria-label="Dark mode"><FaMoon size={16} /></ThemeToggle>
        </Viewport>
      </Window>

      <DockArea>
        <Dock>
          {dockGroups.map((group, g) => (
            <React.Fragment key={g}>
              {g > 0 && <DockDivider />}
              {group.map(([name, Icon, running]) => (
                <DockItem key={name} aria-label={name} $running={running}><Icon /></DockItem>
              ))}
            </React.Fragment>
          ))}
        </Dock>
      </DockArea>
    </Desktop>
  );
}
